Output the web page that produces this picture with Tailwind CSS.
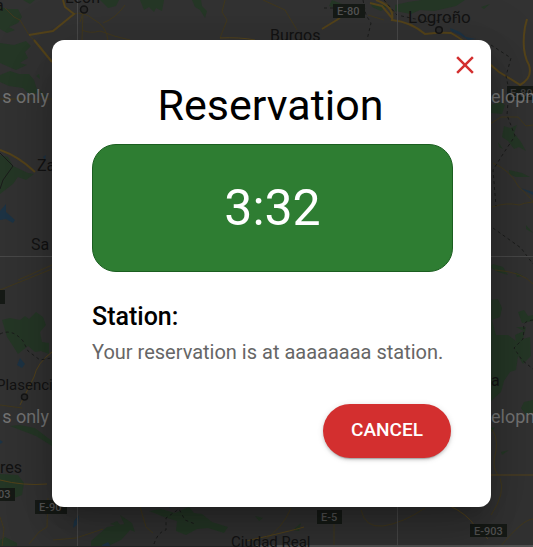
<!DOCTYPE html>
<html lang="en">
<head>
<meta charset="utf-8">
<meta name="viewport" content="width=device-width, initial-scale=1">
<title>Reservation</title>
<script src="https://cdn.jsdelivr.net/npm/@tailwindcss/browser@4"></script>
</head>
<body class="relative min-h-screen overflow-hidden bg-[#323232] font-[Roboto,sans-serif]">
<!-- Dimmed map -->
<svg class="absolute inset-0 h-full w-full" aria-hidden="true" fill="none">
  <g fill="#253726">
    <path d="M0 7l8 2 10 0 4 8-4 6-9 4 6 3-8 3-7-4zM0 43l14 2 12-4 5 5-6 6 3 6-8 5 7 2-11 5-16-7zM23 0l7 4 5-4zM100 0l8 8 8-2 3-6zM140 0l4 10 5-3 5 5 2-4 6 3 2-11zM192 0l3 7 5 3 5 8 2-7-5-5-1-6z"/>
    <path d="M0 75l10-4 9 3 10 0 5 6 4 13-8 2-7-7-14-2-9-4zM18 97l5 3-4 1zM40 90l8 8-7-3zM36 76l3-2 1 5zM0 155l8 2 5 9 15 7 6 1-8 6-8-3-5 7-13 10z"/>
    <path d="M2 320l8-2 10 2 5-4 4 3 7-7 7 5 3 8-6 7 2 10 7 1v11l-8-3-6 1-7-6-10 8-7-11-4-6zM10 426l10-1 15 3 17 13v5l-16-10zM0 474l18 1 6 8-2 12-13 5-9-3zM0 540l5-3 12 6v4H0z"/>
    <path d="M332 0l10 4-5 4-8-2zM370 2l18 4-7 5-9-4zM395 5l13-3 14-2h43l-9 6-13 3-9 2-14-1-9 4-16-3zM481 7l9-3-6 5z"/>
    <path d="M491 105l9-3 5 3-3 9-11-1zM504 126l6 2 7-3-3 8 7 9 5 9-7-4-5 2-6-8-6-4zM498 142l5 7-4-2zM509 170l13 3 8 4-14 0-7-3zM493 264l10 3 5 8-10-3-8-5zM515 272l8 4-6 1zM526 225l7 8-7-4z"/>
    <path d="M490 300l8-1 4 9-2 9-8 3 4 15 12 0 8 6-1-6 9-4-8-4 10 0-3 12 7-2 1 19-8 8-5-8-2 14-6 2-6 9-3 11-11 10zM518 312l6-2 4 6 5-1v6l-11 2zM533 400l-9 2-3 6 5 7 7-2zM490 428l5-1-3 5zM501 452l8-2-7 5z"/>
    <path d="M149 511l12-2 14 4 14-6 5 6 8 1 10 8 16 5-4 6-16-5-11 1-11 6-10-4 1-10-13-4zM91 541l16-14 23-4 1 6-10 11-15 7H91zM110 524l7-3 6 7-7-2zM120 515l12 8 3 9-9-4zM255 516l8 2-4 3zM293 530l8-7-2 8z"/>
  </g>
  <g fill="#1d3344">
    <path d="M0 211l6-7 0 8 9 8-2 3-7-4-6 1zM20 358l5 6-3 4-5-3zM74 521l5-6-1 9-5 4zM102 545l6-3 3 5h-9zM167 502l7 2-4 4-3-3zM43 157l3-2-1 5zM0 440l3 2-3 2zM520 188l13 4v3zM450 28l10 4 6 5 10 2-8 1-8-5-9-4z"/>
  </g>
  <g stroke="#41381d" stroke-width="1">
    <path d="M5 8l9 9 6 3 9 15 12 12 9 13M80 22l3-9-1 27M73 14q11-3 20 5 14 7 15 22M82 30q8 4 18 1 15 6 30 9M103 23q13-5 22-18M225 0l-3 12 5 8-7 18M263 0l22 10 12 20M384 0l10 13M368 15l16 5M18 280l34-15M0 290l52-21M0 405l22 3"/>
    <path d="M490 124l11-7 17 0 8 9 7-1M493 163q18 8 25 23 13 12 15 16-10 1-14 3-12-3-27 2M495 270q28 2 38 14M490 428q8 6 6 23-5 15 2 24M500 478q6 15-9 37M500 547q23-28 33-28M140 507l6 20 7 6M53 540l23-2 27-9M29 544l10-12 8-5M0 517l4 12-2 18M47 527l1-29M291 508q-8 20-28 33M334 524v23M361 510q4 18 22 16 20-3 42-18M0 99h52"/>
  </g>
  <g stroke="#54431a" stroke-width="2">
    <path d="M63 0l2 7 9 7-21 17-24 4M376 0q19 7 16 20 19 2 33 14 16-2 26-1 14 8 19 14 15 13 29 25 15 9 21 13 13-7 9-20-8-14-4-38l2-8M392 18l-10-12-12-3M340 18l-18 11M34 40l18 22M0 150q18 6 35 22"/>
    <path d="M52 352q-15 11-18 25l-14 28M0 480q23 6 47 4M450 506q17 8 25 20l13 13M220 38q20-1 35 2M246 541q45-10 58-14M490 475h43" stroke-width="1"/>
  </g>
  <g stroke="#1b1c1b" stroke-width="1">
    <path d="M0 153l13 13-10 14-3 9"/>
    <g stroke-dasharray="3 3">
      <path d="M363 0l3 15 5 8-4 17M491 45l20 13-5 18 3 14-2 25 8 21-12 18-10 16 3 36M493 228l28 20 12 16M0 334q12-6 23 7l5 10 12 9 11-2M533 320q-11 1-9 9l-1 10-9 9 8 12 11 9M154 544q4-12 12-14v-12l13-9 6 11 10 4M324 8h39M384 0l13 15 32 7 30-5"/>
    </g>
  </g>
  <g stroke="#484848"><path d="M77.500 0v547M397.500 0v547M0 256.500h533"/></g>
  <path d="M0 546.500h255" stroke="#252525"/><path d="M255 546h278" stroke="#515151" stroke-width="2"/>
  <g stroke="#151515" stroke-width="1.500" fill="#2b2b2b"><circle cx="84" cy="9.500" r="3.500"/><circle cx="439" cy="30" r="3.300"/><circle cx="24.500" cy="397" r="3"/></g>
  <g font-family="Roboto, sans-serif" fill="#131313" font-size="16">
    <text x="65" y="3">León</text><text x="-5" y="11">a</text><text x="270" y="41">Burgos</text><text x="408" y="23" font-size="17">Logroño</text>
    <text x="37" y="171">Za</text><text x="31" y="250">Sa</text><text x="-4" y="390" font-size="15">Plasencia</text>
    <text x="0" y="473">res</text><text x="491" y="386">a</text><text x="231" y="547" font-size="15">Ciudad Real</text>
  </g>
  <g fill="#161a16"><rect x="333" y="4" width="32" height="14"/><rect x="507" y="86" width="26" height="14"/><rect x="-4" y="290" width="9" height="14"/><rect x="-5" y="488" width="20" height="13"/><rect x="35" y="500" width="32" height="14"/><rect x="317" y="510" width="25" height="14"/><rect x="470" y="524" width="37" height="13"/></g>
  <g font-family="Roboto, sans-serif" fill="#545454" font-size="11" font-weight="500">
    <text x="337" y="15">E-80</text><text x="510" y="97" fill="#3d3d3d">E-80</text><text x="-2" y="498">03</text><text x="39" y="511">E-90</text><text x="321" y="521">E-5</text><text x="474" y="535">E-903</text>
  </g>
  <g font-family="Roboto, sans-serif" fill="#747474" font-size="18">
    <text x="49" y="103" text-anchor="end">s only</text><text x="491" y="103">elopment</text><text x="49" y="423" text-anchor="end">s only</text><text x="491" y="423">elopment</text>
  </g>
</svg>

<main class="relative pt-10 pr-[42px] pb-10 pl-[52px]">
  <section role="dialog" aria-modal="true" aria-labelledby="title" class="relative rounded-xl bg-white pt-10 pr-[38px] pb-[49px] pl-10 shadow-[0_14px_19px_-9px_rgb(0_0_0/0.2),0_30px_48px_4px_rgb(0_0_0/0.14),0_11px_58px_10px_rgb(0_0_0/0.12)]">
    <button type="button" aria-label="Close" class="absolute top-2.5 right-[11px] flex size-[30px] items-center justify-center text-[#d32f2f]">
      <svg class="size-[30px]" viewBox="0 0 24 24" fill="currentColor" aria-hidden="true"><path d="M19 6.410 17.590 5 12 10.590 6.410 5 5 6.410 10.590 12 5 17.590 6.410 19 12 13.410 17.590 19 19 17.590 13.410 12z"/></svg>
    </button>
    <h1 id="title" class="pr-1 text-center text-[43px] leading-[50px]">Reservation</h1>
    <div role="timer" class="mt-3.5 flex h-32 items-center justify-center rounded-3xl border border-[#1b5e20] bg-[#2e7d32] text-[50px] leading-[60px] text-white">3:32</div>
    <h2 class="mt-6 text-[25px] leading-[42px] font-medium">Station:</h2>
    <p class="text-[20px] leading-7 whitespace-nowrap text-[#666666]">Your reservation is at aaaaaaaa station.</p>
    <div class="mt-[38px] flex justify-end pr-0.5">
      <button type="button" class="h-[54px] rounded-full bg-[#d32f2f] px-7 pb-0.5 text-[19px] leading-8 font-medium text-white uppercase shadow-[0_4px_1px_-3px_rgb(0_0_0/0.2),0_2px_3px_0_rgb(0_0_0/0.14),0_1px_6px_0_rgb(0_0_0/0.12)]">Cancel</button>
    </div>
  </section>
</main>
</body>
</html>
